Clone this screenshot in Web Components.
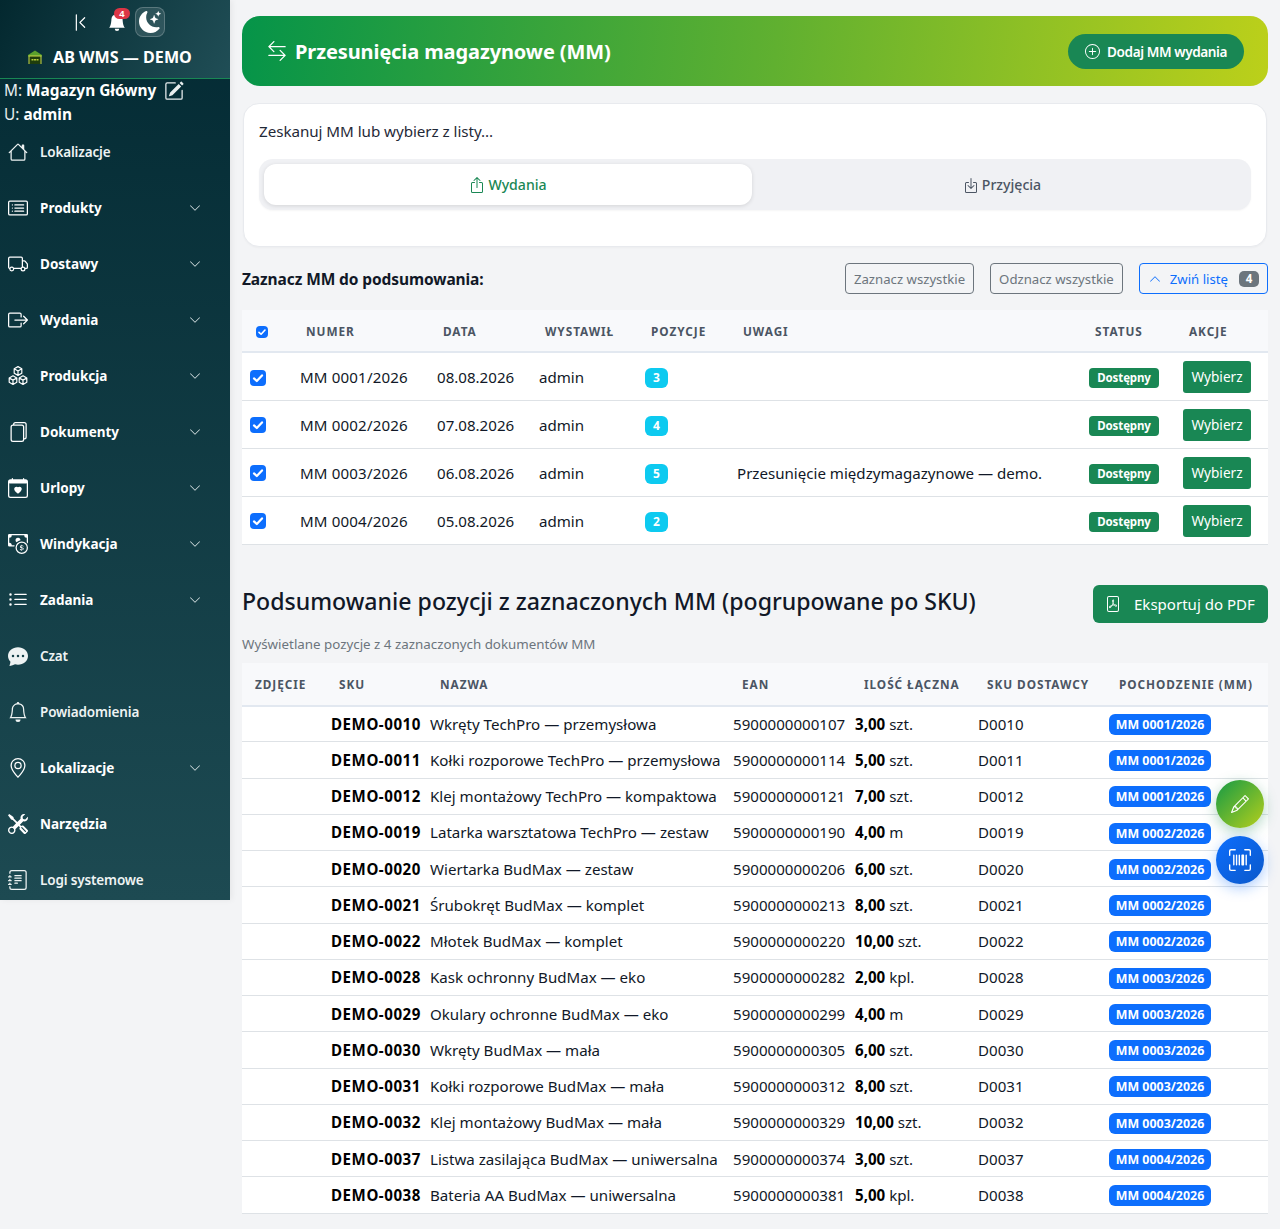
<!DOCTYPE html>
<html lang="pl"><head><meta charset="utf-8"><title>Przesunięcia magazynowe (MM)</title>
<style>
html,body{margin:0;padding:0;background:#f3f4f6}
body{font-family:"Noto Sans","Liberation Sans",sans-serif;color:#111827;}
</style></head>
<body>
<wms-app>
  <app-sidebar slot="side">
    <nav-item icon="house" soft>Lokalizacje</nav-item>
    <nav-item icon="card-list" caret>Produkty</nav-item>
    <nav-item icon="truck" caret>Dostawy</nav-item>
    <nav-item icon="box-right" caret>Wydania</nav-item>
    <nav-item icon="boxes" caret>Produkcja</nav-item>
    <nav-item icon="files" caret>Dokumenty</nav-item>
    <nav-item icon="calendar-heart" caret>Urlopy</nav-item>
    <nav-item icon="cash-coin" caret>Windykacja</nav-item>
    <nav-item icon="list-ul" caret>Zadania</nav-item>
    <nav-item icon="chat" soft>Czat</nav-item>
    <nav-item icon="bell" soft>Powiadomienia</nav-item>
    <nav-item icon="geo" caret>Lokalizacje</nav-item>
    <nav-item icon="tools">Narzędzia</nav-item>
    <nav-item icon="journal" soft>Logi systemowe</nav-item>
  </app-sidebar>
  <page-hero>Przesunięcia magazynowe (MM)</page-hero>
  <scan-card></scan-card>
  <mm-list></mm-list>
  <summary-table></summary-table>
  <fab-stack></fab-stack>
</wms-app>
<script>
const ICONS={
'house':['M8.707 1.5a1 1 0 0 0-1.414 0L.646 8.146a.5.5 0 0 0 .708.708L2 8.207V13.5A1.5 1.5 0 0 0 3.5 15h9a1.5 1.5 0 0 0 1.5-1.5V8.207l.646.647a.5.5 0 0 0 .708-.708L13 5.793V2.5a.5.5 0 0 0-.5-.5h-1a.5.5 0 0 0-.5.5v1.293zM13 7.207V13.5a.5.5 0 0 1-.5.5h-9a.5.5 0 0 1-.5-.5V7.207l5-5z'],
'card-list':['M14.5 3a.5.5 0 0 1 .5.5v9a.5.5 0 0 1-.5.5h-13a.5.5 0 0 1-.5-.5v-9a.5.5 0 0 1 .5-.5zm-13-1A1.5 1.5 0 0 0 0 3.5v9A1.5 1.5 0 0 0 1.5 14h13a1.5 1.5 0 0 0 1.5-1.5v-9A1.5 1.5 0 0 0 14.5 2z','M5 8a.5.5 0 0 1 .5-.5h7a.5.5 0 0 1 0 1h-7A.5.5 0 0 1 5 8m0-2.5a.5.5 0 0 1 .5-.5h7a.5.5 0 0 1 0 1h-7a.5.5 0 0 1-.5-.5m0 5a.5.5 0 0 1 .5-.5h7a.5.5 0 0 1 0 1h-7a.5.5 0 0 1-.5-.5m-1-5a.5.5 0 1 1-1 0 .5.5 0 0 1 1 0M4 8a.5.5 0 1 1-1 0 .5.5 0 0 1 1 0m0 2.5a.5.5 0 1 1-1 0 .5.5 0 0 1 1 0'],
'truck':['M0 3.5A1.5 1.5 0 0 1 1.5 2h9A1.5 1.5 0 0 1 12 3.5V5h1.02a1.5 1.5 0 0 1 1.17.563l1.481 1.85a1.5 1.5 0 0 1 .329.938V10.5a1.5 1.5 0 0 1-1.5 1.5H14a2 2 0 1 1-4 0H5a2 2 0 1 1-3.998-.085A1.5 1.5 0 0 1 0 10.5zm1.294 7.456A2 2 0 0 1 4.732 11h5.536a2 2 0 0 1 .732-.732V3.5a.5.5 0 0 0-.5-.5h-9a.5.5 0 0 0-.5.5v7a.5.5 0 0 0 .294.456M12 10a2 2 0 0 1 1.732 1h.768a.5.5 0 0 0 .5-.5V8.35a.5.5 0 0 0-.11-.312l-1.48-1.85A.5.5 0 0 0 13.02 6H12zm-9 1a1 1 0 1 0 0 2 1 1 0 0 0 0-2m9 0a1 1 0 1 0 0 2 1 1 0 0 0 0-2'],
'box-right':['M10 12.5a.5.5 0 0 1-.5.5h-8a.5.5 0 0 1-.5-.5v-9a.5.5 0 0 1 .5-.5h8a.5.5 0 0 1 .5.5v2a.5.5 0 0 0 1 0v-2A1.5 1.5 0 0 0 9.5 2h-8A1.5 1.5 0 0 0 0 3.5v9A1.5 1.5 0 0 0 1.5 14h8a1.5 1.5 0 0 0 1.5-1.5v-2a.5.5 0 0 0-1 0z','M15.854 8.354a.5.5 0 0 0 0-.708l-3-3a.5.5 0 0 0-.708.708L14.293 7.5H5.5a.5.5 0 0 0 0 1h8.793l-2.147 2.146a.5.5 0 0 0 .708.708z'],
'files':['M13 0H6a2 2 0 0 0-2 2 2 2 0 0 0-2 2v10a2 2 0 0 0 2 2h7a2 2 0 0 0 2-2 2 2 0 0 0 2-2V2a2 2 0 0 0-2-2m0 13V4a2 2 0 0 0-2-2H5a1 1 0 0 1 1-1h7a1 1 0 0 1 1 1v10a1 1 0 0 1-1 1M3 4a1 1 0 0 1 1-1h7a1 1 0 0 1 1 1v10a1 1 0 0 1-1 1H4a1 1 0 0 1-1-1z'],
'calendar-heart':['M4 .5a.5.5 0 0 0-1 0V1H2a2 2 0 0 0-2 2v11a2 2 0 0 0 2 2h12a2 2 0 0 0 2-2V3a2 2 0 0 0-2-2h-1V.5a.5.5 0 0 0-1 0V1H4zM1 14V4h14v10a1 1 0 0 1-1 1H2a1 1 0 0 1-1-1m7-6.507c1.664-1.711 5.825 1.283 0 5.132-5.825-3.85-1.664-6.843 0-5.132'],
'cash-coin':['M11 15a4 4 0 1 0 0-8 4 4 0 0 0 0 8m5-4a5 5 0 1 1-10 0 5 5 0 0 1 10 0','M9.438 11.944c.047.596.518 1.06 1.363 1.116v.44h.375v-.443c.875-.061 1.386-.529 1.386-1.207 0-.618-.39-.936-1.09-1.1l-.296-.07v-1.2c.376.043.614.248.671.532h.658c-.047-.575-.54-1.024-1.329-1.073V8.5h-.375v.45c-.747.073-1.255.522-1.255 1.158 0 .562.378.92 1.007 1.066l.248.061v1.272c-.384-.058-.639-.27-.696-.563h-.668zm1.36-1.354c-.369-.085-.569-.26-.569-.522 0-.294.216-.514.572-.578v1.1zm.432.746c.449.104.655.272.655.569 0 .339-.257.571-.709.635v-1.224z','M1 0a1 1 0 0 0-1 1v8a1 1 0 0 0 1 1h4.083q.088-.517.258-1H3a2 2 0 0 0-2-2V3a2 2 0 0 0 2-2h10a2 2 0 0 0 2 2v3.528c.38.34.717.728 1 1.154V1a1 1 0 0 0-1-1z','M9.998 5.083 10 5a2 2 0 1 0-3.132 1.65 6 6 0 0 1 3.13-1.567'],
'list-ul':['M5 11.5a.5.5 0 0 1 .5-.5h9a.5.5 0 0 1 0 1h-9a.5.5 0 0 1-.5-.5m0-4a.5.5 0 0 1 .5-.5h9a.5.5 0 0 1 0 1h-9a.5.5 0 0 1-.5-.5m0-4a.5.5 0 0 1 .5-.5h9a.5.5 0 0 1 0 1h-9a.5.5 0 0 1-.5-.5m-3 1a1 1 0 1 0 0-2 1 1 0 0 0 0 2m0 4a1 1 0 1 0 0-2 1 1 0 0 0 0 2m0 4a1 1 0 1 0 0-2 1 1 0 0 0 0 2'],
'chat':['M16 8c0 3.866-3.582 7-8 7a9 9 0 0 1-2.347-.306c-.584.296-1.925.864-4.181 1.234-.2.032-.352-.176-.273-.362.354-.836.674-1.95.77-2.966C.744 11.37 0 9.76 0 8c0-3.866 3.582-7 8-7s8 3.134 8 7M5 8a1 1 0 1 0-2 0 1 1 0 0 0 2 0m4 0a1 1 0 1 0-2 0 1 1 0 0 0 2 0m3 1a1 1 0 1 0 0-2 1 1 0 0 0 0 2'],
'bell':['M8 16a2 2 0 0 0 2-2H6a2 2 0 0 0 2 2M8 1.918l-.797.161A4 4 0 0 0 4 6c0 .628-.134 2.197-.459 3.742-.16.767-.376 1.566-.663 2.258h10.244c-.287-.692-.502-1.49-.663-2.258C12.134 8.197 12 6.628 12 6a4 4 0 0 0-3.203-3.92zM14.22 12c.223.447.481.801.78 1H1c.299-.199.557-.553.78-1C2.68 10.2 3 6.88 3 6c0-2.42 1.72-4.44 4.005-4.901a1 1 0 1 1 1.99 0A5 5 0 0 1 13 6c0 .88.32 4.2 1.22 6'],
'bell-fill':['M8 16a2 2 0 0 0 2-2H6a2 2 0 0 0 2 2m.995-14.901a1 1 0 1 0-1.99 0A5 5 0 0 0 3 6c0 1.098-.5 6-2 7h14c-1.5-1-2-5.902-2-7 0-2.42-1.72-4.44-4.005-4.901'],
'geo':['M12.166 8.94c-.524 1.062-1.234 2.12-1.96 3.07A32 32 0 0 1 8 14.58a32 32 0 0 1-2.206-2.57c-.726-.95-1.436-2.008-1.96-3.07C3.304 7.867 3 6.862 3 6a5 5 0 0 1 10 0c0 .862-.305 1.867-.834 2.94M8 16s6-5.686 6-10A6 6 0 0 0 2 6c0 4.314 6 10 6 10','M8 8a2 2 0 1 1 0-4 2 2 0 0 1 0 4m0 1a3 3 0 1 0 0-6 3 3 0 0 0 0 6'],
'tools':['M1 0 0 1l2.2 3.081a1 1 0 0 0 .815.419h.07a1 1 0 0 1 .708.293l2.675 2.675-2.617 2.654A3.003 3.003 0 0 0 0 13a3 3 0 1 0 5.878-.851l2.654-2.617.968.968-.305.914a1 1 0 0 0 .242 1.023l3.27 3.27a.997.997 0 0 0 1.414 0l1.586-1.586a.997.997 0 0 0 0-1.414l-3.27-3.27a1 1 0 0 0-1.023-.242L10.5 9.5l-.96-.96 2.68-2.643A3.005 3.005 0 0 0 16 3q0-.405-.102-.777l-2.14 2.141L12 4l-.364-1.757L13.777.102a3 3 0 0 0-3.675 3.68L7.462 6.46 4.793 3.793a1 1 0 0 1-.293-.707v-.071a1 1 0 0 0-.419-.814zm9.646 10.646a.5.5 0 0 1 .708 0l2.914 2.915a.456.456 0 0 1-.645.645l-2.915-2.914a.5.5 0 0 1 0-.646M3 11l.471.242.529.026.287.445.445.287.026.529L5 13l-.242.471-.026.529-.445.287-.287.445-.529.026L3 15l-.471-.242L2 14.732l-.287-.445L1.268 14l-.026-.529L1 13l.242-.471.026-.529.445-.287.287-.445.529-.026z'],
'journal':['M5 10.5a.5.5 0 0 1 .5-.5h2a.5.5 0 0 1 0 1h-2a.5.5 0 0 1-.5-.5m0-2a.5.5 0 0 1 .5-.5h5a.5.5 0 0 1 0 1h-5a.5.5 0 0 1-.5-.5m0-2a.5.5 0 0 1 .5-.5h5a.5.5 0 0 1 0 1h-5a.5.5 0 0 1-.5-.5m0-2a.5.5 0 0 1 .5-.5h5a.5.5 0 0 1 0 1h-5a.5.5 0 0 1-.5-.5','M3 0h10a2 2 0 0 1 2 2v12a2 2 0 0 1-2 2H3a2 2 0 0 1-2-2v-1h1v1a1 1 0 0 0 1 1h10a1 1 0 0 0 1-1V2a1 1 0 0 0-1-1H3a1 1 0 0 0-1 1v1H1V2a2 2 0 0 1 2-2','M1 5v-.5a.5.5 0 0 1 1 0V5h.5a.5.5 0 0 1 0 1h-2a.5.5 0 0 1 0-1zm0 3v-.5a.5.5 0 0 1 1 0V8h.5a.5.5 0 0 1 0 1h-2a.5.5 0 0 1 0-1zm0 3v-.5a.5.5 0 0 1 1 0v.5h.5a.5.5 0 0 1 0 1h-2a.5.5 0 0 1 0-1z'],
'chevron-down':['M1.646 4.646a.5.5 0 0 1 .708 0L8 10.293l5.646-5.647a.5.5 0 0 1 .708.708l-6 6a.5.5 0 0 1-.708 0l-6-6a.5.5 0 0 1 0-.708'],
'chevron-up':['M7.646 4.646a.5.5 0 0 1 .708 0l6 6a.5.5 0 0 1-.708.708L8 5.707l-5.646 5.647a.5.5 0 0 1-.708-.708z'],
'chevron-bar-left':['M11.854 3.646a.5.5 0 0 1 0 .708L8.207 8l3.647 3.646a.5.5 0 0 1-.708.708l-4-4a.5.5 0 0 1 0-.708l4-4a.5.5 0 0 1 .708 0M4.5 1a.5.5 0 0 0-.5.5v13a.5.5 0 0 0 1 0v-13a.5.5 0 0 0-.5-.5'],
'moon':['M6 .278a.77.77 0 0 1 .08.858 7.2 7.2 0 0 0-.878 3.46c0 4.021 3.278 7.277 7.318 7.277q.792-.001 1.533-.16a.79.79 0 0 1 .81.316.73.73 0 0 1-.031.893A8.35 8.35 0 0 1 8.344 16C3.734 16 0 12.286 0 7.71 0 4.266 2.114 1.312 5.124.06A.75.75 0 0 1 6 .278','M10.794 3.148a.217.217 0 0 1 .412 0l.387 1.162c.173.518.579.924 1.097 1.097l1.162.387a.217.217 0 0 1 0 .412l-1.162.387a1.73 1.73 0 0 0-1.097 1.097l-.387 1.162a.217.217 0 0 1-.412 0l-.387-1.162A1.73 1.73 0 0 0 9.31 6.593l-1.162-.387a.217.217 0 0 1 0-.412l1.162-.387a1.73 1.73 0 0 0 1.097-1.097zM13.863.099a.145.145 0 0 1 .274 0l.258.774c.115.346.386.617.732.732l.774.258a.145.145 0 0 1 0 .274l-.774.258a1.16 1.16 0 0 0-.732.732l-.258.774a.145.145 0 0 1-.274 0l-.258-.774a1.16 1.16 0 0 0-.732-.732l-.774-.258a.145.145 0 0 1 0-.274l.774-.258c.346-.115.617-.386.732-.732z'],
'pencil-square':['M15.502 1.94a.5.5 0 0 1 0 .706L14.459 3.69l-2-2L13.502.646a.5.5 0 0 1 .707 0l1.293 1.293zm-1.75 2.456-2-2L4.939 9.21a.5.5 0 0 0-.121.196l-.805 2.414a.25.25 0 0 0 .316.316l2.414-.805a.5.5 0 0 0 .196-.12l6.813-6.814z','M1 13.5A1.5 1.5 0 0 0 2.5 15h11a1.5 1.5 0 0 0 1.5-1.5v-6a.5.5 0 0 0-1 0v6a.5.5 0 0 1-.5.5h-11a.5.5 0 0 1-.5-.5v-11a.5.5 0 0 1 .5-.5H9a.5.5 0 0 0 0-1H2.5A1.5 1.5 0 0 0 1 2.5z'],
'arrows':['M1 11.5a.5.5 0 0 0 .5.5h11.793l-3.147 3.146a.5.5 0 0 0 .708.708l4-4a.5.5 0 0 0 0-.708l-4-4a.5.5 0 0 0-.708.708L13.293 11H1.5a.5.5 0 0 0-.5.5m14-7a.5.5 0 0 1-.5.5H2.707l3.147 3.146a.5.5 0 1 1-.708.708l-4-4a.5.5 0 0 1 0-.708l4-4a.5.5 0 1 1 .708.708L2.707 4H14.5a.5.5 0 0 1 .5.5'],
'plus-circle':['M8 15A7 7 0 1 1 8 1a7 7 0 0 1 0 14m0 1A8 8 0 1 0 8 0a8 8 0 0 0 0 16','M8 4a.5.5 0 0 1 .5.5v3h3a.5.5 0 0 1 0 1h-3v3a.5.5 0 0 1-1 0v-3h-3a.5.5 0 0 1 0-1h3v-3A.5.5 0 0 1 8 4'],
'box-up':['M3.5 6a.5.5 0 0 0-.5.5v8a.5.5 0 0 0 .5.5h9a.5.5 0 0 0 .5-.5v-8a.5.5 0 0 0-.5-.5h-2a.5.5 0 0 1 0-1h2A1.5 1.5 0 0 1 14 6.5v8a1.5 1.5 0 0 1-1.5 1.5h-9A1.5 1.5 0 0 1 2 14.5v-8A1.5 1.5 0 0 1 3.5 5h2a.5.5 0 0 1 0 1z','M7.646.146a.5.5 0 0 1 .708 0l3 3a.5.5 0 0 1-.708.708L8.5 1.707V10.5a.5.5 0 0 1-1 0V1.707L5.354 3.854a.5.5 0 1 1-.708-.708z'],
'box-down':['M3.5 6a.5.5 0 0 0-.5.5v8a.5.5 0 0 0 .5.5h9a.5.5 0 0 0 .5-.5v-8a.5.5 0 0 0-.5-.5h-2a.5.5 0 0 1 0-1h2A1.5 1.5 0 0 1 14 6.5v8a1.5 1.5 0 0 1-1.5 1.5h-9A1.5 1.5 0 0 1 2 14.5v-8A1.5 1.5 0 0 1 3.5 5h2a.5.5 0 0 1 0 1z','M7.646 11.854a.5.5 0 0 0 .708 0l3-3a.5.5 0 0 0-.708-.708L8.5 10.293V1.5a.5.5 0 0 0-1 0v8.793L5.354 8.146a.5.5 0 1 0-.708.708z'],
'file-pdf':['M4 0a2 2 0 0 0-2 2v12a2 2 0 0 0 2 2h8a2 2 0 0 0 2-2V2a2 2 0 0 0-2-2zm0 1h8a1 1 0 0 1 1 1v12a1 1 0 0 1-1 1H4a1 1 0 0 1-1-1V2a1 1 0 0 1 1-1','M4.603 12.087a.8.8 0 0 1-.438-.42c-.195-.388-.13-.776.08-1.102.198-.307.526-.568.897-.787a7.7 7.7 0 0 1 1.482-.645 20 20 0 0 0 1.062-2.227 7.3 7.3 0 0 1-.43-1.295c-.086-.4-.119-.796-.046-1.136.075-.354.274-.672.65-.823.192-.077.4-.12.602-.077a.7.7 0 0 1 .477.365c.088.164.12.356.127.538.007.187-.012.395-.047.614-.084.51-.27 1.134-.52 1.794a11 11 0 0 0 .98 1.686 5.8 5.8 0 0 1 1.334.05c.364.065.734.195.96.465.12.144.193.32.2.518.007.192-.047.382-.138.563a1.04 1.04 0 0 1-.354.416.86.86 0 0 1-.51.138c-.331-.014-.654-.196-.933-.417a5.7 5.7 0 0 1-.911-.95 11.6 11.6 0 0 0-1.997.406 11.3 11.3 0 0 1-1.021 1.51c-.29.35-.608.655-.926.787a.8.8 0 0 1-.58.029m1.379-1.901q-.25.115-.459.238c-.328.194-.541.383-.647.547-.094.145-.096.25-.04.361q.016.032.026.044l.035-.012c.137-.056.355-.235.635-.572a8 8 0 0 0 .45-.606m1.64-1.33a13 13 0 0 1 1.01-.193 12 12 0 0 1-.51-.858 21 21 0 0 1-.5 1.05zm2.446.45q.226.245.435.41c.24.19.407.253.498.256a.1.1 0 0 0 .07-.015.3.3 0 0 0 .094-.125.44.44 0 0 0 .059-.2.1.1 0 0 0-.026-.063c-.052-.062-.2-.152-.518-.209a4 4 0 0 0-.612-.053zM8.078 5.8a7 7 0 0 0 .2-.828q.046-.282.038-.465a.6.6 0 0 0-.032-.198.5.5 0 0 0-.145.04c-.087.035-.158.106-.196.283-.04.192-.03.469.046.822q.036.167.09.346z'],
'pencil':['M12.146.146a.5.5 0 0 1 .708 0l3 3a.5.5 0 0 1 0 .708l-10 10a.5.5 0 0 1-.168.11l-5 2a.5.5 0 0 1-.65-.65l2-5a.5.5 0 0 1 .11-.168zM11.207 2.5 13.5 4.793 14.793 3.5 12.5 1.207zm1.586 3L10.5 3.207 4 9.707V10h.5a.5.5 0 0 1 .5.5v.5h.5a.5.5 0 0 1 .5.5v.5h.293zm-9.761 5.175-.106.106-1.528 3.821 3.821-1.528.106-.106A.5.5 0 0 1 5 12.5V12h-.5a.5.5 0 0 1-.5-.5V11h-.5a.5.5 0 0 1-.468-.325'],
'upc-scan':['M1.5 1a.5.5 0 0 0-.5.5v3a.5.5 0 0 1-1 0v-3A1.5 1.5 0 0 1 1.5 0h3a.5.5 0 0 1 0 1zM11 .5a.5.5 0 0 1 .5-.5h3A1.5 1.5 0 0 1 16 1.5v3a.5.5 0 0 1-1 0v-3a.5.5 0 0 0-.5-.5h-3a.5.5 0 0 1-.5-.5M.5 11a.5.5 0 0 1 .5.5v3a.5.5 0 0 0 .5.5h3a.5.5 0 0 1 0 1h-3A1.5 1.5 0 0 1 0 14.5v-3a.5.5 0 0 1 .5-.5m15 0a.5.5 0 0 1 .5.5v3a1.5 1.5 0 0 1-1.5 1.5h-3a.5.5 0 0 1 0-1h3a.5.5 0 0 0 .5-.5v-3a.5.5 0 0 1 .5-.5M3 4.5a.5.5 0 0 1 1 0v7a.5.5 0 0 1-1 0zm2 0a.5.5 0 0 1 1 0v7a.5.5 0 0 1-1 0zm2 0a.5.5 0 0 1 1 0v7a.5.5 0 0 1-1 0zm2 0a.5.5 0 0 1 .5-.5h1a.5.5 0 0 1 .5.5v7a.5.5 0 0 1-.5.5h-1a.5.5 0 0 1-.5-.5zm3 0a.5.5 0 0 1 1 0v7a.5.5 0 0 1-1 0z']
};
function cube(x,y,r){const h=r*.87;return `<path d="M${x} ${y-r}L${x+h} ${y-r/2}V${y+r/2}L${x} ${y+r}L${x-h} ${y+r/2}V${y-r/2}ZM${x-h} ${y-r/2}L${x} ${y}L${x+h} ${y-r/2}M${x} ${y}V${y+r}"/>`;}
class BsIcon extends HTMLElement{
  connectedCallback(){
    if(this.shadowRoot)return;
    const n=this.getAttribute('name'),s=this.getAttribute('size')||16;
    const r=this.attachShadow({mode:'open'});
    const body=n==='boxes'
      ?`<g fill="none" stroke="currentColor" stroke-width=".95" stroke-linejoin="round">${cube(8,4,3.5)}${cube(4,11.3,3.5)}${cube(12,11.3,3.5)}</g>`
      :(n==='calendar-heart'?'<path fill="currentColor" d="M1 3h14v1.4H1z"/>':'')+(ICONS[n]||[]).map(d=>`<path fill="currentColor" fill-rule="evenodd" d="${d}"/>`).join('');
    r.innerHTML=`<style>:host{display:inline-flex;flex:none;width:${s}px;height:${s}px}svg{display:block;width:100%;height:100%}</style><svg viewBox="0 0 16 16" aria-hidden="true">${body}</svg>`;
  }
}
customElements.define('bs-icon',BsIcon);

class WmsApp extends HTMLElement{
  constructor(){super();this.attachShadow({mode:'open'}).innerHTML=`<style>
  :host{display:grid;grid-template-columns:230px 1fr;position:relative;width:1280px;height:1229px;overflow:hidden;background:#f3f4f6}
  .side{display:block;height:900px}
  main{padding:16px 12px 0;display:flex;flex-direction:column;min-width:0}
  </style><div class="side"><slot name="side"></slot></div><main><slot></slot></main>`;}
}
customElements.define('wms-app',WmsApp);

class AppSidebar extends HTMLElement{
  constructor(){super();this.attachShadow({mode:'open'}).innerHTML=`<style>
  :host{display:flex;flex-direction:column;height:900px;overflow:hidden;color:#fff;background:linear-gradient(180deg,#032a33 0%,#1d4a52 100%);box-shadow:2px 0 6px rgba(0,0,0,.06);font-family:"Noto Sans",sans-serif}
  header{height:78px;box-sizing:border-box;border-bottom:0;background:linear-gradient(115deg,#03282f 0%,#204e56 100%);flex:none;display:flex;flex-direction:column}
  .rule{height:1px;background:#198754;flex:none}
  .tools{height:44px;display:flex;align-items:center;padding-left:71px;box-sizing:border-box;padding-top:0}
  .bell{position:relative;display:inline-flex;margin-left:18px;color:#fff}
  .cnt{position:absolute;left:6px;top:-5px;width:16px;height:11px;border-radius:6px;background:#dc3545;color:#fff;font:700 9.5px/11px "Liberation Sans",sans-serif;text-align:center}
  .moon{margin-left:9px;width:30px;height:30px;box-sizing:border-box;border:1px solid rgba(255,255,255,.22);background:rgba(255,255,255,.11);border-radius:8px;display:flex;align-items:center;justify-content:center}
  .brand{display:flex;align-items:center;height:26px;padding-left:27px;gap:10px;font-weight:700;font-size:16.1px}
  .meta{height:45px;padding:0 0 0 4px;font-size:15.4px;line-height:24px;flex:none;color:#e9eeef;padding-top:0}
  .meta b{color:#fff;font-weight:700}
  .meta div{display:flex;align-items:center;white-space:nowrap}
  .meta bs-icon{margin-left:8px}
  </style>
  <header>
    <div class="tools"><bs-icon name="chevron-bar-left" size="19"></bs-icon>
      <span class="bell"><bs-icon name="bell-fill" size="18"></bs-icon><span class="cnt">4</span></span>
      <span class="moon"><bs-icon name="moon" size="22"></bs-icon></span></div>
    <div class="brand"><svg width="16" height="16" viewBox="0 0 16 16" aria-hidden="true"><path fill="#5aa02c" d="M1 6 8 1.5 15 6v1.5H1z"/><path fill="#1f3d0c" d="M2 7h12v8H2z"/><path fill="#cbd94a" d="M1.5 6.6h13v.9h-13zM1.5 7.5h1v7.5h-1zM13.5 7.5h1v7.5h-1z"/><path fill="#b5cc3a" d="M4.5 10h2v1.6h-2zM7 10h2v1.6H7zM9.5 10h2v1.6h-2z"/></svg><span>AB WMS — DEMO</span></div>
  </header><div class="rule"></div>
  <div class="meta"><div>M:&nbsp;<b>Magazyn Główny</b><bs-icon name="pencil-square" size="20"></bs-icon></div><div>U:&nbsp;<b>admin</b></div></div>
  <nav><slot></slot></nav>`;}
}
customElements.define('app-sidebar',AppSidebar);

class NavItem extends HTMLElement{
  constructor(){super();const r=this.attachShadow({mode:'open'});
    r.innerHTML=`<style>
    :host{display:flex;align-items:center;height:56px;padding-left:8px;color:#fff;font-size:13.5px;font-weight:700;box-sizing:border-box;margin-top:0}
    :host([soft]){font-weight:600;color:#eef3f3;letter-spacing:-.15px}
    .ic{margin-right:12px;display:inline-flex}
    .t{flex:1;white-space:nowrap}
    .c{margin-right:29px;display:none;color:#dfe8e9}
    :host([caret]) .c{display:inline-flex}
    </style><span class="ic" id="i"></span><span class="t"><slot></slot></span><span class="c"><bs-icon name="chevron-down" size="12"></bs-icon></span>`;
    r.getElementById('i').innerHTML=`<bs-icon name="${this.getAttribute('icon')}" size="20"></bs-icon>`;
  }
}
customElements.define('nav-item',NavItem);

class PageHero extends HTMLElement{
  constructor(){super();this.attachShadow({mode:'open'}).innerHTML=`<style>
  :host{display:flex;align-items:center;height:70px;flex:none;padding:0 24px 0 25px;border-radius:18px;background:linear-gradient(97deg,#059449 0%,#60b030 52%,#bcd01a 100%);color:#fff;box-sizing:border-box}
  h1{margin:0 0 0 8px;font-size:20px;font-weight:700;letter-spacing:-.1px;flex:1;white-space:nowrap}
  .b{display:flex;align-items:center;height:35px;padding:0 17px;gap:7px;border-radius:18px;background:#198754;font-size:13.6px;font-weight:600;letter-spacing:-.42px;white-space:nowrap}
  </style><bs-icon name="arrows" size="20"></bs-icon><h1><slot></slot></h1><span class="b"><bs-icon name="plus-circle" size="15"></bs-icon>Dodaj MM wydania</span>`;}
}
customElements.define('page-hero',PageHero);

class ScanCard extends HTMLElement{
  constructor(){super();this.attachShadow({mode:'open'}).innerHTML=`<style>
  :host{display:block;flex:none;margin:17px 1px 0;height:144px;box-sizing:border-box;background:#fff;border:1px solid #e8eaee;border-radius:16px;padding:15px 15px 16px;box-shadow:0 1px 2px rgba(0,0,0,.03)}
  p{margin:0;font-size:15.2px;line-height:24px;height:40px;letter-spacing:-.05px;color:#1f2937}
  .tabs{display:flex;gap:6px;padding:5px;background:#f0f1f4;border-radius:14px;height:51px;box-sizing:border-box;box-shadow:0 1px 2px rgba(0,0,0,.04)}
  .tab{flex:1;display:flex;align-items:center;justify-content:center;gap:3px;border-radius:12px;font-size:14.1px;color:#4b5563;font-weight:500}
  .on{background:#fff;color:#198754;box-shadow:0 1px 4px rgba(0,0,0,.12)}
  </style><p>Zeskanuj MM lub wybierz z listy...</p>
  <div class="tabs"><div class="tab on"><bs-icon name="box-up" size="16"></bs-icon>Wydania</div><div class="tab"><bs-icon name="box-down" size="16"></bs-icon>Przyjęcia</div></div>`;}
}
customElements.define('scan-card',ScanCard);

const CHECK=s=>`<span class="cb" style="width:${s}px;height:${s}px"><svg viewBox="0 0 16 16" width="${s}" height="${s}"><path d="M4 8.4 6.8 11 12 5.4" fill="none" stroke="#fff" stroke-width="2.2" stroke-linecap="round" stroke-linejoin="round"/></svg></span>`;
const TABLE_CSS=`
  table{border-collapse:collapse;table-layout:fixed;width:1026px;font-size:15.1px}
  th{background:#f8f9fb;font-size:11.8px;font-weight:700;letter-spacing:.95px;text-transform:uppercase;color:#4b5563;text-align:left;border-bottom:2px solid #e2e8f0;padding:0;white-space:nowrap}
  td{background:#fff;border-bottom:1px solid #dee2e6;padding:0 0 0 8px;white-space:nowrap;color:#111827}
  .cb{display:inline-block;background:#0d6efd;border-radius:4px;vertical-align:middle;line-height:0}
  td .cb{margin-bottom:2px}
  .cb svg{display:block}
`;
class MmList extends HTMLElement{
  constructor(){super();
    const rows=[['0001/2026','08.08.2026','3',''],['0002/2026','07.08.2026','4',''],['0003/2026','06.08.2026','5','Przesunięcie międzymagazynowe — demo.'],['0004/2026','05.08.2026','2','']];
    const cols=[50,137,102,106,92,352,94,93];
    const heads=[[14,CHECK(12)],[14,'Numer'],[14,'Data'],[14,'Wystawił'],[14,'Pozycje'],[14,'Uwagi'],[14,'Status'],[14,'Akcje']];
    this.attachShadow({mode:'open'}).innerHTML=`<style>
    :host{display:block;flex:none;margin-top:16px}
    .head{display:flex;align-items:center;height:31px;margin-bottom:16px}
    h2{margin:0;flex:1;font-size:15.5px;font-weight:700;color:#111827;letter-spacing:-.1px}
    .btn{display:inline-flex;align-items:center;height:31px;box-sizing:border-box;border:1px solid #6c757d;border-radius:4px;color:#6c757d;font-size:13.2px;padding:0 8px;margin-left:16px;white-space:nowrap;justify-content:center}
    .blue{border-color:#0d6efd;color:#0d6efd;padding:0 8px 0 9px}
    .blue i{font-style:normal;margin:0 11px 0 9px}
    .n{background:#6c757d;color:#fff;border-radius:5px;font-size:11.5px;font-weight:700;width:20px;height:16px;line-height:16px;text-align:center}
    ${TABLE_CSS}
    thead tr{height:42px}
    tbody tr{height:48px}
    tbody td{padding-top:2px}
    .mm{letter-spacing:.15px}
    .cnt{display:inline-block;width:23px;height:20px;line-height:20px;text-align:center;background:#0dcaf0;color:#fff;border-radius:6px;font-size:12px;font-weight:700;vertical-align:middle}
    .st{display:inline-block;width:70px;height:20px;line-height:20px;text-align:center;background:#198754;color:#fff;border-radius:4px;font-size:11.5px;font-weight:700;letter-spacing:-.1px;vertical-align:middle}
    .go{display:inline-flex;align-items:center;justify-content:center;width:68px;height:32px;background:#198754;color:#fff;border-radius:3px;font-size:13.6px;vertical-align:middle;padding-bottom:2px;box-sizing:border-box}
    </style>
    <div class="head"><h2>Zaznacz MM do podsumowania:</h2><span class="btn">Zaznacz wszystkie</span><span class="btn">Odznacz wszystkie</span><span class="btn blue"><bs-icon name="chevron-up" size="12"></bs-icon><i>Zwiń listę</i><span class="n">4</span></span></div>
    <table><colgroup>${cols.map(w=>`<col style="width:${w}px">`).join('')}</colgroup>
    <thead><tr>${heads.map(h=>`<th style="padding-left:${h[0]}px">${h[1]}</th>`).join('')}</tr></thead>
    <tbody>${rows.map(r=>`<tr><td>${CHECK(16)}</td><td class="mm">MM ${r[0]}</td><td>${r[1]}</td><td>admin</td><td><span class="cnt">${r[2]}</span></td><td>${r[3]}</td><td><span class="st">Dostępny</span></td><td><span class="go">Wybierz</span></td></tr>`).join('')}</tbody></table>`;
  }
}
customElements.define('mm-list',MmList);

class SummaryTable extends HTMLElement{
  constructor(){super();
    const d=[['0010','Wkręty TechPro — przemysłowa','107','3,00','szt.','1'],['0011','Kołki rozporowe TechPro — przemysłowa','114','5,00','szt.','1'],['0012','Klej montażowy TechPro — kompaktowa','121','7,00','szt.','1'],['0019','Latarka warsztatowa TechPro — zestaw','190','4,00','m','2'],['0020','Wiertarka BudMax — zestaw','206','6,00','szt.','2'],['0021','Śrubokręt BudMax — komplet','213','8,00','szt.','2'],['0022','Młotek BudMax — komplet','220','10,00','szt.','2'],['0028','Kask ochronny BudMax — eko','282','2,00','kpl.','3'],['0029','Okulary ochronne BudMax — eko','299','4,00','m','3'],['0030','Wkręty BudMax — mała','305','6,00','szt.','3'],['0031','Kołki rozporowe BudMax — mała','312','8,00','szt.','3'],['0032','Klej montażowy BudMax — mała','329','10,00','szt.','3'],['0037','Listwa zasilająca BudMax — uniwersalna','374','3,00','szt.','4'],['0038','Bateria AA BudMax — uniwersalna','381','5,00','kpl.','4']];
    const cols=[81,99,303,122,123,131,167];
    const heads=[[13,'Zdjęcie'],[16,'SKU'],[18,'Nazwa'],[17,'EAN'],[17,'Ilość łączna'],[17,'SKU dostawcy'],[18,'Pochodzenie (MM)']];
    this.attachShadow({mode:'open'}).innerHTML=`<style>
    :host{display:block;flex:none;margin-top:40px}
    .head{display:flex;align-items:flex-start;height:38px}
    h2{margin:0;flex:1;font-size:23.1px;line-height:33px;font-weight:500;color:#111827;white-space:nowrap}
    .pdf{display:flex;align-items:center;height:38px;width:175px;box-sizing:border-box;padding-left:12px;gap:13px;background:#198754;color:#fff;border-radius:6px;font-size:15.05px;white-space:nowrap}
    p{margin:11px 0 8px;font-size:13.35px;line-height:21px;color:#6c757d}
    ${TABLE_CSS}
    thead tr{height:43px}
    tbody tr{height:36.25px}
    .sku{font-weight:700;color:#000;letter-spacing:.55px}
    .q{font-weight:700;color:#000}
    .pill{display:inline-block;width:102px;height:21px;line-height:21px;text-align:center;background:#0d6efd;color:#fff;border-radius:6px;font-size:12.4px;font-weight:700;vertical-align:middle}
    </style>
    <div class="head"><h2>Podsumowanie pozycji z zaznaczonych MM (pogrupowane po SKU)</h2><span class="pdf"><bs-icon name="file-pdf" size="16"></bs-icon>Eksportuj do PDF</span></div>
    <p>Wyświetlane pozycje z 4 zaznaczonych dokumentów MM</p>
    <table><colgroup>${cols.map(w=>`<col style="width:${w}px">`).join('')}</colgroup>
    <thead><tr>${heads.map(h=>`<th style="padding-left:${h[0]}px">${h[1]}</th>`).join('')}</tr></thead>
    <tbody>${d.map(r=>`<tr><td></td><td class="sku">DEMO-${r[0]}</td><td>${r[1]}</td><td>5900000000${r[2]}</td><td><span class="q">${r[3]}</span> ${r[4]}</td><td>D${r[0]}</td><td><span class="pill">MM 000${r[5]}/2026</span></td></tr>`).join('')}</tbody></table>`;
  }
}
customElements.define('summary-table',SummaryTable);

class FabStack extends HTMLElement{
  constructor(){super();this.attachShadow({mode:'open'}).innerHTML=`<style>
  :host{position:absolute;left:1216px;top:780px;display:flex;flex-direction:column;gap:8px}
  span{width:48px;height:48px;border-radius:50%;display:flex;align-items:center;justify-content:center;color:#fff}
  .a{background:linear-gradient(135deg,#159a45,#b5cf1c);box-shadow:0 4px 14px rgba(25,135,84,.35)}
  .b{background:linear-gradient(135deg,#0d6efd,#0a58ca);box-shadow:0 4px 14px rgba(13,110,253,.35)}
  </style><span class="a"><bs-icon name="pencil" size="18"></bs-icon></span><span class="b"><bs-icon name="upc-scan" size="22"></bs-icon></span>`;}
}
customElements.define('fab-stack',FabStack);
</script>
</body></html>
